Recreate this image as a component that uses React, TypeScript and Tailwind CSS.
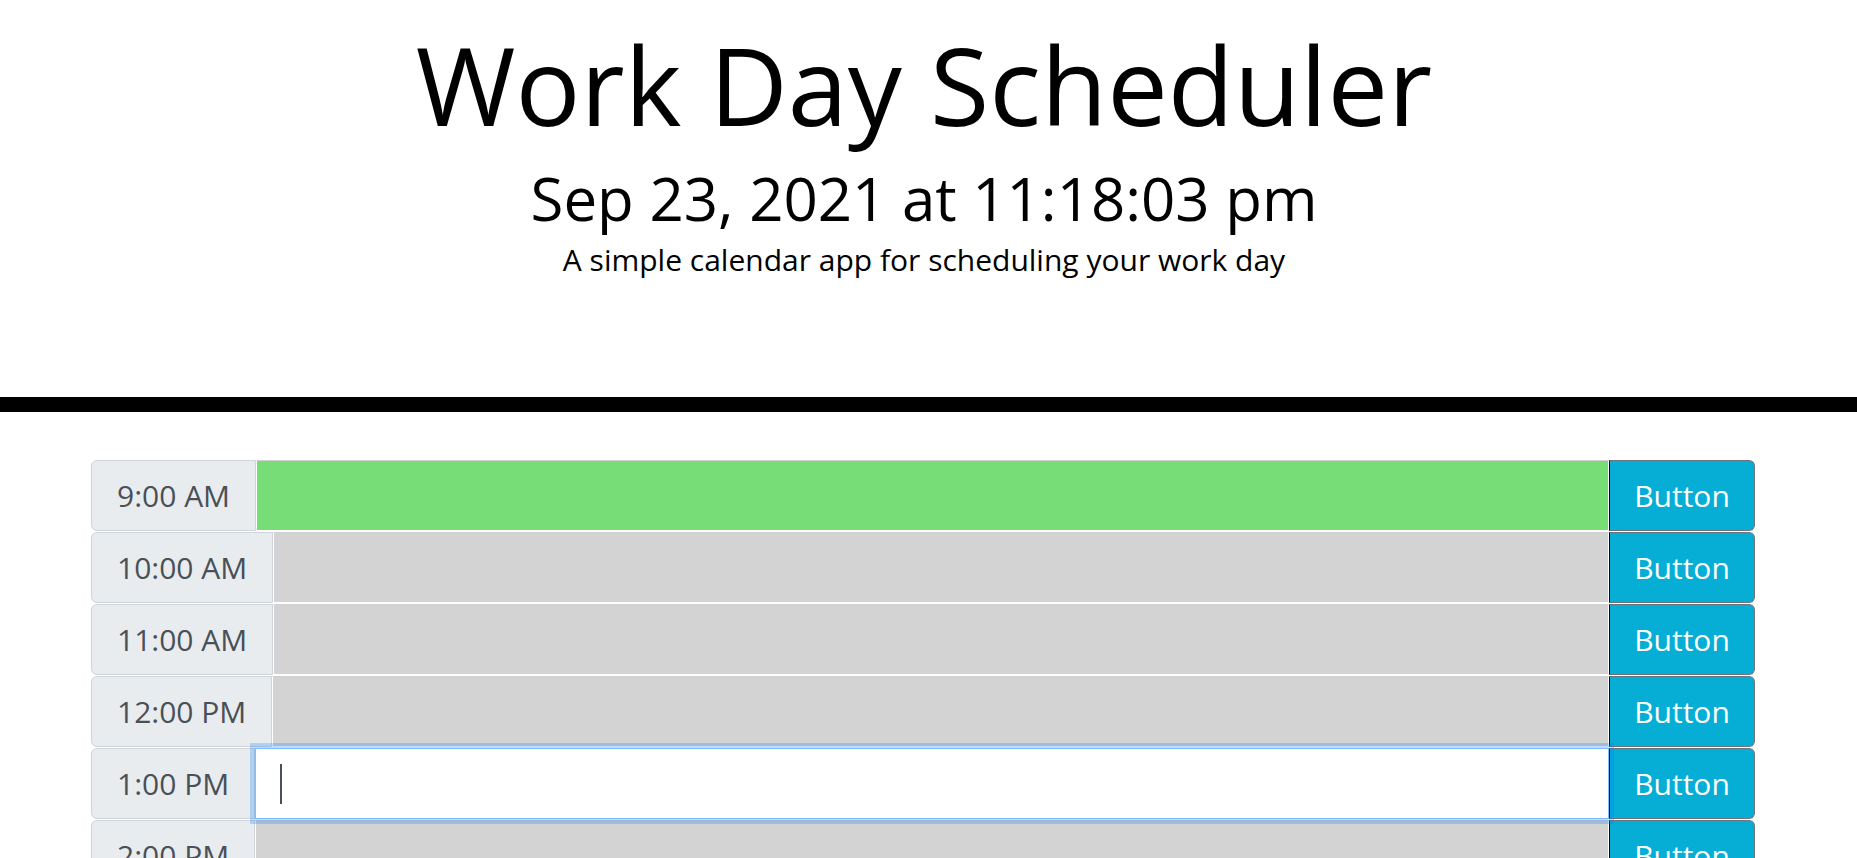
import React from "react";

type Row = { label: string; state: "future" | "past" | "focus" };

const rows: Row[] = [
  { label: "9:00 AM", state: "future" },
  { label: "10:00 AM", state: "past" },
  { label: "11:00 AM", state: "past" },
  { label: "12:00 PM", state: "past" },
  { label: "1:00 PM", state: "focus" },
  { label: "2:00 PM", state: "past" },
];

export default function App() {
  return (
    <div className="min-h-screen bg-white font-['Open_Sans',sans-serif] text-black overflow-hidden">
      <header className="text-center pr-[9px]">
        <h1 className="text-[108px] leading-[1.2] font-normal pt-[20px]">Work Day Scheduler</h1>
        <p className="text-[60px] leading-[1.2] font-normal mt-[12px]">Sep 23, 2021 at 11:18:03 pm</p>
        <p className="text-[30px] leading-[1.5] mt-[3px]">A simple calendar app for scheduling your work day</p>
      </header>
      <div className="h-[15px] bg-black mt-[115px]" />
      <div className="mt-[48px] ml-[91px] w-[1664px] flex flex-col">
        {rows.map((r) => (
          <div key={r.label} className="flex h-[71px] mb-[1px]">
            <div className="flex items-center px-[25px] bg-[#e9ecef] border border-[#ced4da] rounded-l-[6px] text-[30px] leading-[1.5] text-[#495057] whitespace-nowrap">
              {r.label}
            </div>
            {r.state === "focus" ? (
              <div className="relative z-10 flex-1 h-full bg-white border border-[#80bdff] shadow-[0_0_0_5px_rgba(0,123,255,0.25)]">
                <span className="absolute left-[24px] top-[15px] w-[2px] h-[40px] bg-[#495057]" />
              </div>
            ) : (
              <textarea
                className={
                  "flex-1 h-full resize-none outline-none border border-white border-t-[#d0d0d0] " +
                  (r.state === "future" ? "bg-[#77dd77]" : "bg-[#d3d3d3]")
                }
              />
            )}
            <button className="w-[146px] h-full bg-[#06aed5] text-white text-[30px] leading-[1.5] border border-[#6c757d] border-l-black rounded-r-[6px]">
              Button
            </button>
          </div>
        ))}
      </div>
    </div>
  );
}
